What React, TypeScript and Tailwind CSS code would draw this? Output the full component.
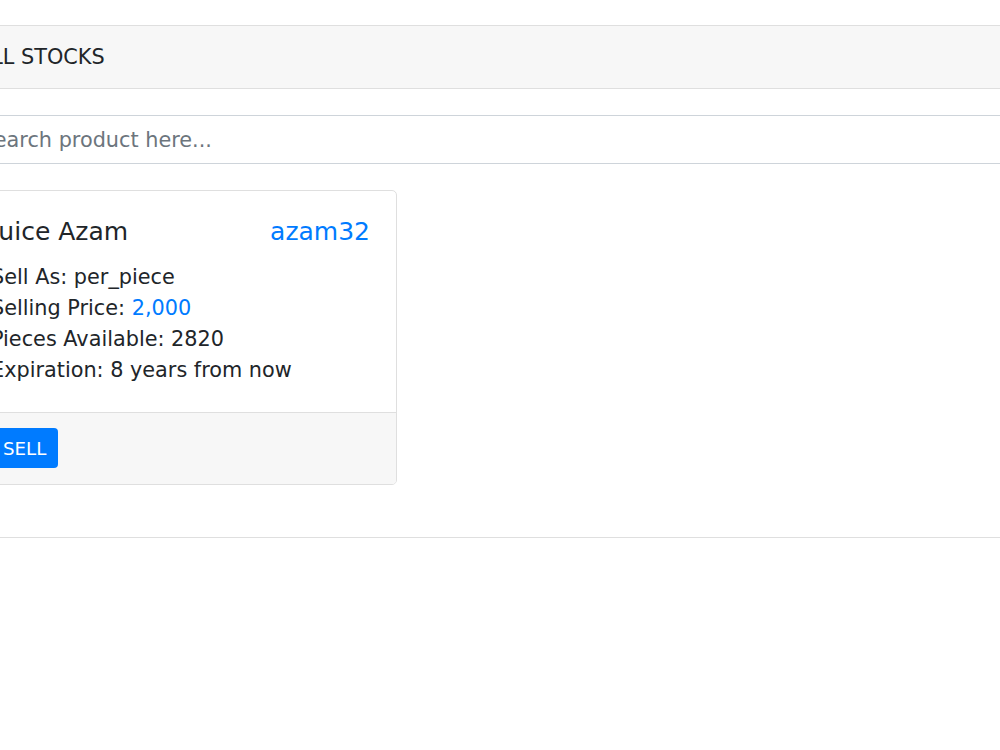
export default function App() {
  return (
    <div
      className="min-h-screen w-[1000px] overflow-hidden bg-white text-[#212529]"
      style={{ fontFamily: '"DejaVu Sans", sans-serif' }}
    >
      <div className="pt-[25px]">
        {/* outer card, scrolled partly out of view on the left */}
        <div className="-ml-[50px] w-[1120px] rounded-[5px] border border-[#dfdfdf]">
          <div className="border-b border-[#dfdfdf] bg-[#f7f7f7] px-[26px] py-[15.6px] text-[20.8px] leading-[31.2px]">
            ALL STOCKS
          </div>

          <div className="px-[13px] pt-[26px] pb-[52px]">
            <input
              type="text"
              placeholder="Search product here..."
              className="block h-[48.5px] w-full rounded-[5px] border border-[#ced4da] bg-white px-[15.6px] text-[20.8px] leading-[31.2px] text-[#495057] placeholder:text-[#6c757d] focus:outline-none"
            />

            <div className="mt-[26px] w-[433px] overflow-hidden rounded-[5px] border border-[#dfdfdf]">
              <div className="px-[26px] pt-[26px] pb-[26px]">
                <div className="mb-[15px] flex items-center justify-between text-[25px] leading-[30px]">
                  <span>Juice Azam</span>
                  <span className="text-[#007bff]">azam32</span>
                </div>
                <div className="text-[20.8px] leading-[31px]">
                  <p>Sell As: per_piece</p>
                  <p>
                    Selling Price: <span className="text-[#007bff]">2,000</span>
                  </p>
                  <p>Pieces Available: 2820</p>
                  <p>Expiration: 8 years from now</p>
                </div>
              </div>
              <div className="border-t border-[#dfdfdf] bg-[#f7f7f7] px-[26px] py-[15.6px]">
                <button
                  type="button"
                  className="flex h-[39.7px] items-center rounded-[4px] bg-[#007bff] px-[12px] text-[18.2px] text-white"
                >
                  SELL
                </button>
              </div>
            </div>
          </div>
        </div>
      </div>
    </div>
  );
}
